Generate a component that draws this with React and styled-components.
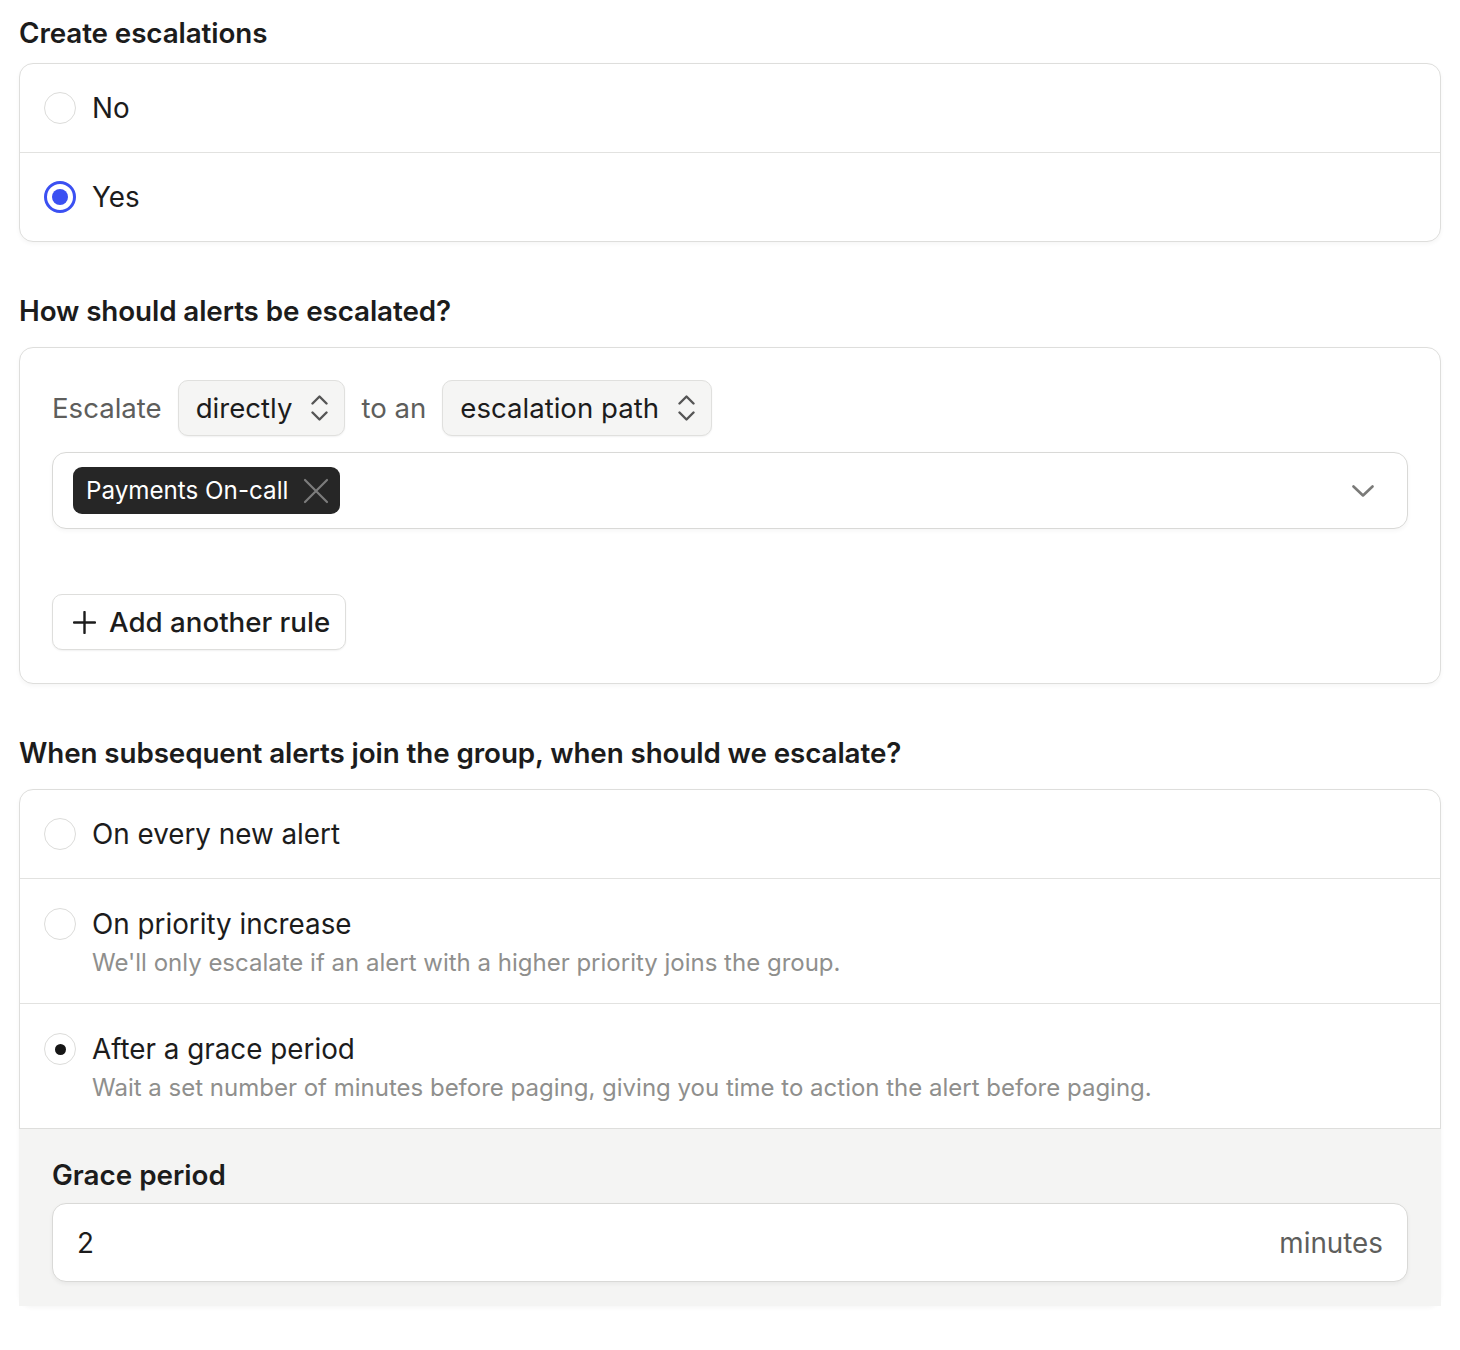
import React from 'react';
import styled, { createGlobalStyle } from 'styled-components';

const GlobalStyle = createGlobalStyle`
  body {
    margin: 0;
    background: #ffffff;
    font-family: Inter, "Noto Sans", sans-serif;
    color: #1c1c1c;
  }
`;

const Page = styled.div`
  padding: 13px 19px 40px;
  display: flex;
  flex-direction: column;
  gap: 49px;
`;

const Section = styled.section`
  display: flex;
  flex-direction: column;
  gap: ${(p) => p.gap || 10}px;
`;

const Heading = styled.h2`
  margin: 0;
  font-size: 27.8px;
  font-weight: 600;
  line-height: 40px;
  color: #1c1c1c;
  letter-spacing: -0.1px;
`;

const Card = styled.div`
  border: 1px solid #dededc;
  border-radius: 14px;
  background: #fff;
  box-shadow: 0 2px 4px rgba(0, 0, 0, 0.04);
  display: flex;
  flex-direction: column;
`;

const OptionRow = styled.label`
  display: flex;
  gap: 16px;
  padding: ${(p) => (p.withHint ? '29px 24px 23px' : '28px 24px 28px')};
  border-top: ${(p) => (p.first ? 'none' : '1px solid #e2e2e0')};
  cursor: pointer;
`;

const Radio = styled.span`
  flex: 0 0 auto;
  width: 32px;
  height: 32px;
  box-sizing: border-box;
  border-radius: 50%;
  border: ${(p) => (p.variant === 'blue' ? '3px solid #3b50f2' : '1px solid #dcdcda')};
  background: #fff;
  display: flex;
  align-items: center;
  justify-content: center;
  &::after {
    content: '';
    display: ${(p) => (p.variant ? 'block' : 'none')};
    width: ${(p) => (p.variant === 'blue' ? 16 : 11)}px;
    height: ${(p) => (p.variant === 'blue' ? 16 : 11)}px;
    border-radius: 50%;
    background: ${(p) => (p.variant === 'blue' ? '#3b50f2' : '#161616')};
  }
`;

const OptionText = styled.div`
  display: flex;
  flex-direction: column;
  gap: 6px;
`;

const OptionLabel = styled.span`
  font-size: 27.8px;
  line-height: 32px;
  color: #1c1c1c;
`;

const OptionHint = styled.span`
  font-size: 24px;
  line-height: 34px;
  color: #8f8f8d;
`;

const RuleBody = styled.div`
  padding: 32px 32px 33px;
  display: flex;
  flex-direction: column;
`;

const SentenceRow = styled.div`
  display: flex;
  align-items: center;
  gap: 16px;
  font-size: 27.6px;
  color: #5e5e5c;
`;

const InlineSelect = styled.button`
  display: inline-flex;
  align-items: center;
  gap: 19px;
  height: 56px;
  padding: 0 16px 0 17px;
  border: 1px solid #e0e0de;
  border-radius: 10px;
  background: #f5f5f4;
  box-shadow: 0 1px 2px rgba(0, 0, 0, 0.06);
  font-family: inherit;
  font-size: 27.6px;
  color: #1c1c1c;
  svg {
    color: #555;
  }
`;

const MultiSelect = styled.div`
  margin-top: 16px;
  height: 77px;
  box-sizing: border-box;
  border: 1px solid #d9d9d7;
  border-radius: 14px;
  background: #fff;
  box-shadow: 0 2px 4px rgba(0, 0, 0, 0.04);
  display: flex;
  align-items: center;
  padding: 0 33px 0 20px;
  justify-content: space-between;
  > svg {
    color: #7a7a78;
  }
`;

const Tag = styled.span`
  display: inline-flex;
  align-items: center;
  gap: 15px;
  height: 47px;
  padding: 0 11px 0 13px;
  border-radius: 9px;
  background: #262626;
  color: #fff;
  font-size: 24.2px;
  svg {
    color: #7c7c7c;
  }
`;

const AddButton = styled.button`
  align-self: flex-start;
  margin-top: 65px;
  display: inline-flex;
  align-items: center;
  gap: 13px;
  height: 56px;
  padding: 0 15px 0 20px;
  border: 1px solid #dededc;
  border-radius: 10px;
  background: #fff;
  box-shadow: 0 1px 2px rgba(0, 0, 0, 0.06);
  font-family: inherit;
  font-size: 27.7px;
  font-weight: 500;
  color: #1c1c1c;
`;

const GracePanel = styled.div`
  background: #f4f4f3;
  border-top: 1px solid #dededc;
  margin: 0 -1px -1px;
  padding: 28px 33px 24px;
  display: flex;
  flex-direction: column;
  gap: 10px;
`;

const FieldLabel = styled.span`
  font-size: 27.8px;
  font-weight: 600;
  line-height: 36px;
`;

const NumberField = styled.div`
  height: 79px;
  box-sizing: border-box;
  border: 1px solid #d9d9d7;
  border-radius: 14px;
  background: #fff;
  box-shadow: 0 2px 4px rgba(0, 0, 0, 0.05);
  display: flex;
  align-items: center;
  justify-content: space-between;
  padding: 0 24px;
  font-size: 27.8px;
`;

const Unit = styled.span`
  color: #5e5e5c;
`;

const UpDownIcon = () => (
  <svg width="17" height="30" viewBox="0 0 17 30" fill="none" stroke="currentColor" strokeWidth="2.4" strokeLinecap="round" strokeLinejoin="round">
    <path d="M1.5 10.5 8.5 3.5 15.5 10.5" />
    <path d="M1.5 19.5 8.5 26.5 15.5 19.5" />
  </svg>
);

const CloseIcon = () => (
  <svg width="26" height="26" viewBox="0 0 26 26" fill="none" stroke="currentColor" strokeWidth="2.2" strokeLinecap="round">
    <path d="M2 2 24 24M24 2 2 24" />
  </svg>
);

const DownIcon = () => (
  <svg width="22" height="12" viewBox="0 0 22 12" fill="none" stroke="currentColor" strokeWidth="2.6" strokeLinecap="round" strokeLinejoin="round">
    <path d="M1.5 1.5 11 10.5 20.5 1.5" />
  </svg>
);

const PlusIcon = () => (
  <svg width="23" height="23" viewBox="0 0 23 23" fill="none" stroke="currentColor" strokeWidth="2.4" strokeLinecap="round">
    <path d="M11.5 1v21M1 11.5h21" />
  </svg>
);

const Option = ({ label, hint, radio, first }) => (
  <OptionRow first={first} withHint={!!hint}>
    <Radio variant={radio} />
    <OptionText>
      <OptionLabel>{label}</OptionLabel>
      {hint && <OptionHint>{hint}</OptionHint>}
    </OptionText>
  </OptionRow>
);

const App = () => (
  <>
    <GlobalStyle />
    <Page>
      <Section>
        <Heading>Create escalations</Heading>
        <Card>
          <Option first label="No" />
          <Option label="Yes" radio="blue" />
        </Card>
      </Section>

      <Section gap={16}>
        <Heading>How should alerts be escalated?</Heading>
        <Card>
          <RuleBody>
            <SentenceRow>
              Escalate
              <InlineSelect>
                directly
                <UpDownIcon />
              </InlineSelect>
              to an
              <InlineSelect>
                escalation path
                <UpDownIcon />
              </InlineSelect>
            </SentenceRow>
            <MultiSelect>
              <Tag>
                Payments On-call
                <CloseIcon />
              </Tag>
              <DownIcon />
            </MultiSelect>
            <AddButton>
              <PlusIcon />
              Add another rule
            </AddButton>
          </RuleBody>
        </Card>
      </Section>

      <Section gap={16}>
        <Heading>When subsequent alerts join the group, when should we escalate?</Heading>
        <Card>
          <Option first label="On every new alert" />
          <Option
            label="On priority increase"
            hint="We'll only escalate if an alert with a higher priority joins the group."
          />
          <Option
            label="After a grace period"
            hint="Wait a set number of minutes before paging, giving you time to action the alert before paging."
            radio="dark"
          />
          <GracePanel>
            <FieldLabel>Grace period</FieldLabel>
            <NumberField>
              2
              <Unit>minutes</Unit>
            </NumberField>
          </GracePanel>
        </Card>
      </Section>
    </Page>
  </>
);

export default App;
